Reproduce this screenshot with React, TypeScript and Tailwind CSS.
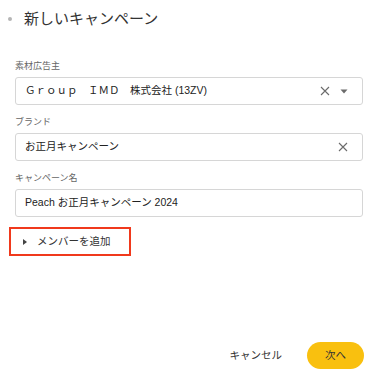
import React from "react";

const XIcon = () => (
  <svg width="10" height="10" viewBox="0 0 10 10" className="block">
    <path d="M1 1 L9 9 M9 1 L1 9" stroke="#6b6b6b" strokeWidth="1.1" fill="none" />
  </svg>
);

const Caret = () => (
  <svg width="8" height="5" viewBox="0 0 8 5" className="block">
    <path d="M0.5 0.5 L7.5 0.5 L4 4.5 Z" fill="#6b6b6b" />
  </svg>
);

export default function App() {
  return (
    <div
      className="w-[387px] h-[377px] bg-white flex flex-col text-[#222]"
      style={{ fontFamily: '"Liberation Sans", "Noto Sans CJK JP", sans-serif' }}
    >
      <div className="flex items-center h-[20px] mt-[9px] pl-[8px]">
        <div className="w-[4px] h-[4px] rounded-full bg-[#b5b5b5]" />
        <div className="ml-[12px] text-[15px] leading-[20px] text-[#333]">新しいキャンペーン</div>
      </div>

      <div className="flex flex-col px-[15px] pr-[24px] mt-[31px]">
        <div className="text-[9px] leading-[12px] text-[#666]">素材広告主</div>
        <div className="mt-[5px] h-[28px] border border-[#d6d6d6] rounded-[3px] flex items-center pl-[9px] pr-[14px]">
          <div className="flex-1 text-[10.5px]">Ｇｒｏｕｐ　ＩＭＤ　株式会社 (13ZV)</div>
          <XIcon />
          <div className="ml-[10px]">
            <Caret />
          </div>
        </div>

        <div className="mt-[11px] text-[9px] leading-[12px] text-[#666]">ブランド</div>
        <div className="mt-[5px] h-[28px] border border-[#d6d6d6] rounded-[3px] flex items-center pl-[9px] pr-[14px]">
          <div className="flex-1 text-[10.5px]">お正月キャンペーン</div>
          <XIcon />
        </div>

        <div className="mt-[11px] text-[9px] leading-[12px] text-[#666]">キャンペーン名</div>
        <div className="mt-[5px] h-[28px] border border-[#d6d6d6] rounded-[3px] flex items-center pl-[9px] pr-[14px]">
          <div className="flex-1 text-[10.5px]">Peach お正月キャンペーン 2024</div>
        </div>
      </div>

      <div className="pl-[9px] mt-[10px]">
        <div className="w-[122px] h-[29px] border-2 border-[#f0391c] flex items-center pl-[12px]">
          <svg width="4" height="6" viewBox="0 0 4 6" className="block">
            <path d="M0 0 L4 3 L0 6 Z" fill="#444" />
          </svg>
          <div className="ml-[10px] text-[10.5px] text-[#333]">メンバーを追加</div>
        </div>
      </div>

      <div className="flex-1" />

      <div className="flex items-center justify-end pr-[23px] mb-[8px]">
        <div className="text-[10.5px] text-[#333] mr-[25px]">キャンセル</div>
        <div className="w-[57px] h-[27px] rounded-full bg-[#f9c00f] flex items-center justify-center text-[10.5px] text-[#333]">
          次へ
        </div>
      </div>
    </div>
  );
}
